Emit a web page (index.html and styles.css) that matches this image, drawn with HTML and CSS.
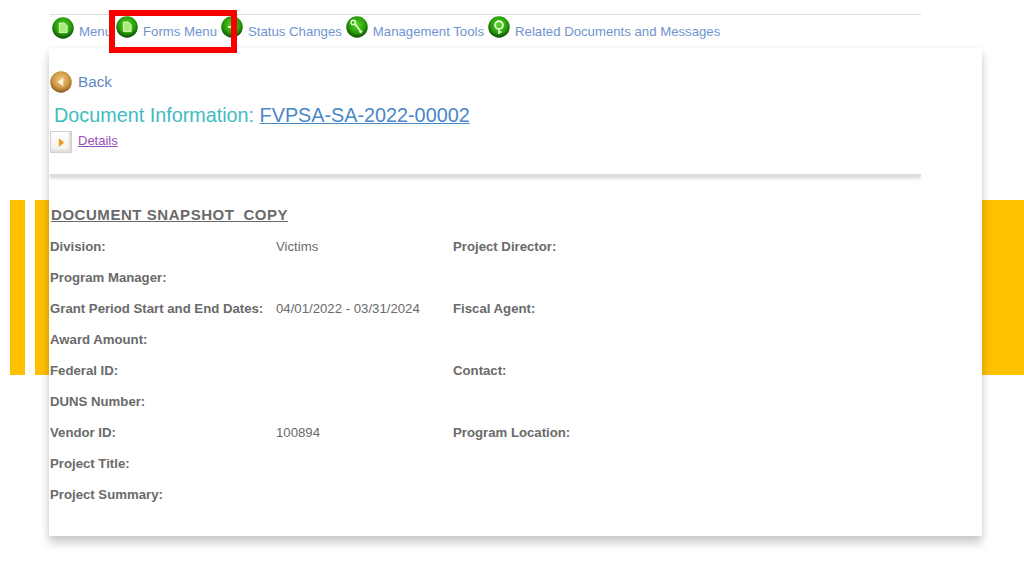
FILE: index.html
```html
<!DOCTYPE html>
<html lang="en">
<head>
<meta charset="utf-8">
<title>Document Information</title>
<link rel="stylesheet" href="styles.css">
</head>
<body>
<div class="band" aria-hidden="true">
  <span class="band-bar band-bar--a"></span>
  <span class="band-bar band-bar--b"></span>
  <span class="band-bar band-bar--c"></span>
</div>

<nav class="nav">
  <a class="nav-item">
    <svg class="nav-icon" viewBox="0 0 24 24">
      <defs>
        <radialGradient id="green" cx="50%" cy="40%" r="60%">
          <stop offset="0" stop-color="#58d626"/>
          <stop offset=".62" stop-color="#2a9f0a"/>
          <stop offset="1" stop-color="#0a4a03"/>
        </radialGradient>
        <radialGradient id="gold" cx="50%" cy="40%" r="60%">
          <stop offset="0" stop-color="#eec77e"/>
          <stop offset=".62" stop-color="#cf9a45"/>
          <stop offset="1" stop-color="#85581a"/>
        </radialGradient>
      </defs>
      <circle cx="12" cy="12" r="11.700" fill="url(#green)"/>
      <path d="M8 6.500h5.500L16.500 9.500V17H8z" fill="#a8ec7c" stroke="#e9ffd8" stroke-width=".9"/>
    </svg>
    <span>Menu</span>
  </a>
  <a class="nav-item">
    <svg class="nav-icon nav-icon--raised" viewBox="0 0 24 24">
      <circle cx="12" cy="12" r="11.700" fill="url(#green)"/>
      <path d="M8 6.500h5.500L16.500 9.500V17H8z" fill="#a8ec7c" stroke="#e9ffd8" stroke-width=".9"/>
    </svg>
    <span>Forms Menu</span>
  </a>
  <a class="nav-item">
    <svg class="nav-icon nav-icon--raised" viewBox="0 0 24 24">
      <circle cx="12" cy="12" r="11.700" fill="url(#green)"/>
      <path d="M7.500 12h9M12 7.500v9" stroke="#e4fbd2" stroke-width="2" fill="none"/>
    </svg>
    <span>Status Changes</span>
  </a>
  <a class="nav-item">
    <svg class="nav-icon nav-icon--raised" viewBox="0 0 24 24">
      <circle cx="12" cy="12" r="11.700" fill="url(#green)"/>
      <path d="M9 7.500l6.500 8.500" stroke="#e4fbd2" stroke-width="1.800" fill="none"/>
      <circle cx="8" cy="7" r="2.400" fill="none" stroke="#e4fbd2" stroke-width="1.500"/>
      <path d="M14 17.500l2.500 1.500 1.500-2.500-2-1.500z" fill="#e4fbd2"/>
    </svg>
    <span>Management Tools</span>
  </a>
  <a class="nav-item">
    <svg class="nav-icon nav-icon--raised" viewBox="0 0 24 24">
      <circle cx="12" cy="12" r="11.700" fill="url(#green)"/>
      <circle cx="12" cy="10" r="4.200" fill="none" stroke="#e4fbd2" stroke-width="2.200"/>
      <path d="M12 14v5.500M12 17.500h3" stroke="#e4fbd2" stroke-width="1.800" fill="none"/>
    </svg>
    <span>Related Documents and Messages</span>
  </a>
</nav>
<div class="highlight" aria-hidden="true"></div>

<main class="card">
  <a class="back">
    <svg class="back-icon" viewBox="0 0 24 24">
      <circle cx="12" cy="12" r="11.700" fill="url(#gold)"/>
      <path d="M14.500 7v10L8 12z" fill="#fbf0d8"/>
    </svg>
    <span>Back</span>
  </a>
  <h1 class="doc-title">Document Information: <a class="doc-link">FVPSA-SA-2022-00002</a></h1>
  <div class="details">
    <span class="details-btn">
      <svg class="details-arrow" viewBox="0 0 8 12"><path d="M1 1l6 5-6 5z" fill="#ee9a1c"/></svg>
    </span>
    <a class="details-link">Details</a>
  </div>
  <div class="divider"></div>

  <h2 class="section-title">DOCUMENT SNAPSHOT_COPY</h2>
  <div class="fields">
    <span class="label">Division:</span><span class="value">Victims</span><span class="label">Project Director:</span>
    <span class="label full">Program Manager:</span>
    <span class="label">Grant Period Start and End Dates:</span><span class="value">04/01/2022 - 03/31/2024</span><span class="label">Fiscal Agent:</span>
    <span class="label full">Award Amount:</span>
    <span class="label">Federal ID:</span><span class="value"></span><span class="label">Contact:</span>
    <span class="label full">DUNS Number:</span>
    <span class="label">Vendor ID:</span><span class="value">100894</span><span class="label">Program Location:</span>
    <span class="label full">Project Title:</span>
    <span class="label full">Project Summary:</span>
  </div>
</main>
</body>
</html>
```
FILE: styles.css
```css
* { box-sizing: border-box; }
html, body { margin: 0; padding: 0; }
body {
  position: relative;
  width: 1024px;
  height: 576px;
  overflow: hidden;
  background: #fff;
  font-family: "Liberation Sans", Arial, sans-serif;
  color: #6a6a6a;
}
.band {
  position: absolute;
  left: 0;
  top: 200px;
  width: 1024px;
  height: 175px;
}
.band-bar { position: absolute; top: 0; bottom: 0; background: #ffc000; }
.band-bar--a { left: 10px; width: 15px; }
.band-bar--b { left: 35px; width: 15px; }
.band-bar--c { left: 982px; right: 0; }

.nav {
  position: relative;
  display: flex;
  margin: 14px 0 0 50px;
  width: 871px;
  height: 34px;
  border-top: 1px solid #dcdcdc;
  padding-left: 2px;
  column-gap: 4px;
  font-size: 13.200px;
  color: #6f94cf;
}
.nav-item { display: flex; align-items: flex-start; column-gap: 5px; }
.nav-item span { margin-top: 9px; line-height: 15px; }
.nav-icon { width: 22px; height: 22px; margin-top: 2px; flex: none; }
.nav-icon--raised { margin-top: 1px; }

.highlight {
  position: absolute;
  z-index: 2;
  left: 109px;
  top: 10px;
  width: 128px;
  height: 43px;
  border: 6px solid #f60000;
}

.card {
  position: relative;
  margin-left: 49px;
  width: 933px;
  height: 488px;
  padding: 23px 0 0 1px;
  background: #fff;
  box-shadow: 0 7px 9px rgba(0, 0, 0, .2), 0 0 5px rgba(0, 0, 0, .06);
}
.back {
  display: flex;
  align-items: center;
  column-gap: 6px;
  height: 22px;
  font-size: 15.300px;
  color: #5f88c0;
}
.back-icon { width: 22px; height: 22px; }
.doc-title {
  margin: 10px 0 0 4px;
  font-size: 19.800px;
  font-weight: 400;
  line-height: 24px;
  color: #3fbcc0;
}
.doc-link { color: #4a86c8; text-decoration: underline; }
.details {
  display: flex;
  align-items: center;
  column-gap: 6px;
  margin-top: 4px;
  height: 22px;
  font-size: 13px;
}
.details-btn {
  display: flex;
  align-items: center;
  justify-content: center;
  width: 22px;
  height: 22px;
  border: 1px solid #d0d0d0;
  background: linear-gradient(#fff, #f3f0ea);
  box-shadow: inset -2px -2px 2px #e0ddd8;
}
.details-arrow { width: 7px; height: 11px; }
.details-link { color: #9a4fb8; text-decoration: underline; margin-top: -4px; }
.divider {
  margin-top: 21px;
  width: 871px;
  height: 3px;
  background: #dcdcdc;
  box-shadow: 0 2px 3px rgba(0, 0, 0, .12);
}
.section-title {
  margin: 29px 0 0 1px;
  font-size: 15px;
  line-height: 18px;
  font-weight: 700;
  letter-spacing: .55px;
  text-decoration: underline;
  text-decoration-skip-ink: none;
  color: #6a6a6a;
}
.fields {
  display: grid;
  grid-template-columns: 226px 177px 1fr;
  grid-auto-rows: 31px;
  margin-top: 7px;
  font-size: 13.200px;
  line-height: 31px;
}
.label { font-weight: 700; color: #6a6a6a; }
.value { color: #6a6a6a; }
.full { grid-column: 1 / -1; }
```
